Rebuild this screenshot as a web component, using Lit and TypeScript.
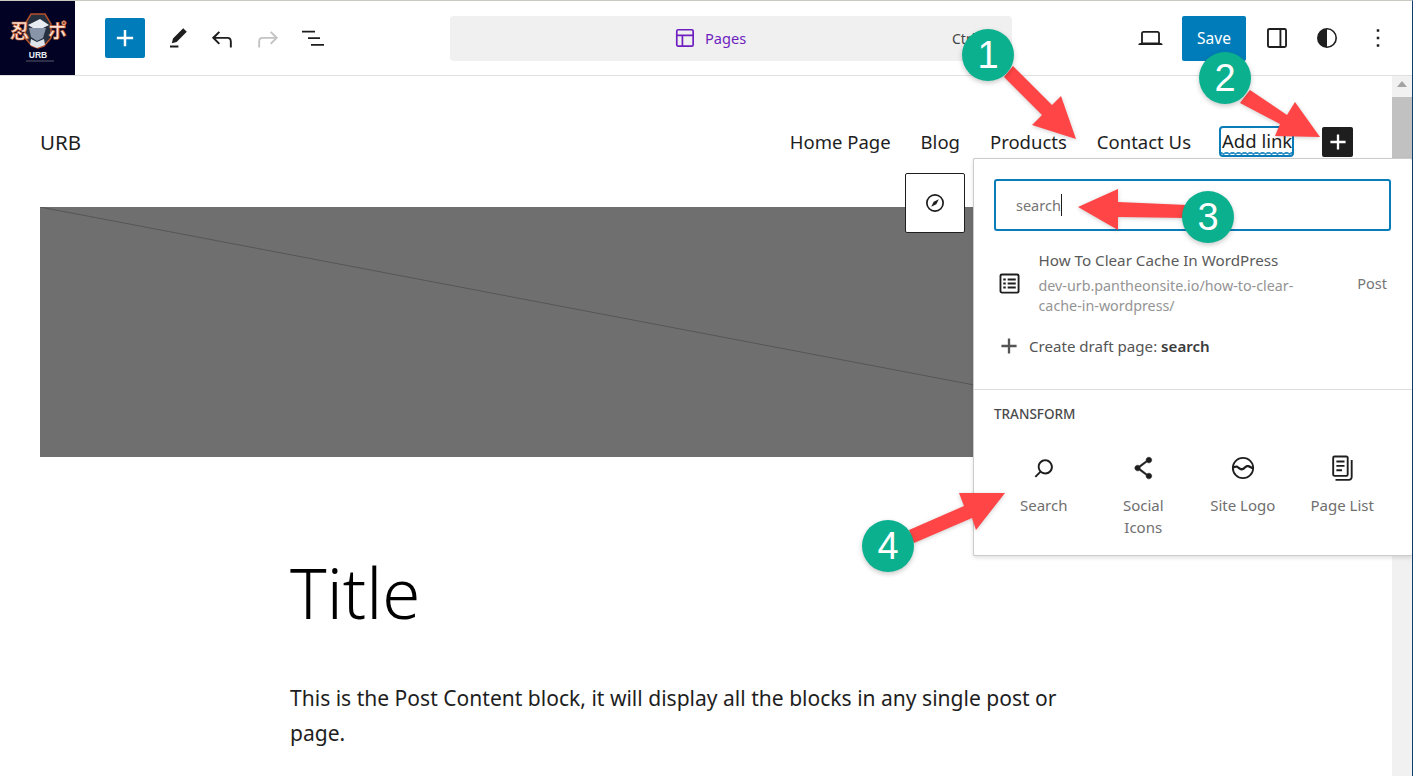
import { LitElement, html, css, svg } from "lit";
import { customElement } from "lit/decorators.js";

const ico = (d: any, size = 24) => html`<svg width=${size} height=${size} viewBox="0 0 24 24" fill="currentColor">${d}</svg>`;

const plus = svg`<path d="M11 5.500h2V11h5.500v2H13v5.500h-2V13H5.500v-2H11z"/>`;
const pen = svg`<path d="m19 7-3-3-8.500 8.500-1 4 4-1L19 7Zm-7 11.500H5V20h7v-1.500Z" transform="translate(-2 -2.600) scale(1.2)"/>`;
const undo = svg`<path d="M18.300 11.700c-.6-.6-1.400-.9-2.300-.9H6.700l3.400-3.400-1.100-1-5.200 5.100 5.200 5.200 1.100-1.100-3.400-3.400H16c.5 0 .9.200 1.200.5.3.3.5.800.5 1.300V19h1.500v-4.500c0-1.100-.3-2-.9-2.800z"/>`;
const redo = svg`<path d="M5.700 11.700c.6-.6 1.400-.9 2.300-.9h9.300l-3.400-3.400 1.100-1 5.200 5.100-5.200 5.200-1.100-1.100 3.400-3.400H8c-.5 0-.9.200-1.200.5-.3.3-.5.800-.5 1.300V19H4.800v-4.500c0-1.100.3-2 .9-2.800z"/>`;
const listView = svg`<path d="M1 4.800h13v1.700H1zM7 11.200h12v1.700H7zM10 18h13v1.700H10z"/>`;
const pages = svg`<path d="M18 4H6a2 2 0 0 0-2 2v12c0 1.100.9 2 2 2h12a2 2 0 0 0 2-2V6a2 2 0 0 0-2-2zM5.500 6c0-.3.200-.5.500-.5h12c.3 0 .5.200.5.500v3h-13V6zm0 12v-7.500H9v8H6a.5.5 0 0 1-.5-.5zm13 0c0 .3-.2.500-.5.500h-7.500v-8h8V18z" transform="translate(-1.600 -1.600) scale(1.13)"/>`;
const laptop = svg`<path d="M20.500 16h-.7V8c0-1.100-.9-2-2-2H6.200c-1.100 0-2 .9-2 2v8h-.7c-.8 0-1.500.7-1.500 1.500h20c0-.8-.7-1.500-1.500-1.500zM5.700 8c0-.3.200-.5.500-.5h11.600c.3 0 .5.200.5.500v7.600H5.700V8z" transform="translate(0 -.2)"/>`;
const sidebar = svg`<path d="M18 4H6a2 2 0 0 0-2 2v12c0 1.100.9 2 2 2h12a2 2 0 0 0 2-2V6a2 2 0 0 0-2-2zM6 18.500a.5.5 0 0 1-.5-.5V6c0-.3.200-.5.500-.5h8v13H6zm12.500-.5c0 .3-.2.500-.5.500h-2.500v-13H18c.3 0 .5.200.5.500v12z" transform="translate(-1.800 -1.800) scale(1.15)"/>`;
const contrast = svg`<path fill-rule="evenodd" d="M12 2a10 10 0 1 0 0 20 10 10 0 0 0 0-20zm0 1.600a8.400 8.400 0 0 1 0 16.800V3.600z"/>`;
const dots = svg`<path d="M13 19h-2v-2h2v2zm0-6h-2v-2h2v2zm0-6h-2V5h2v2z"/>`;
const compass = svg`<path fill-rule="evenodd" d="M12 3a9 9 0 1 0 0 18 9 9 0 0 0 0-18zm0 1.700a7.300 7.300 0 1 1 0 14.600 7.300 7.300 0 0 1 0-14.600z"/><path d="m15.800 8.200-5.100 2.500-2.500 5.100 5.100-2.500z"/>`;
const postList = svg`<path d="M18 4H6a2 2 0 0 0-2 2v12c0 1.100.9 2 2 2h12a2 2 0 0 0 2-2V6a2 2 0 0 0-2-2zm.500 14c0 .3-.2.500-.5.500H6a.5.5 0 0 1-.5-.5V6c0-.3.200-.5.500-.5h12c.3 0 .5.200.5.500v12zM7 8h2v1.600H7zM10.500 8H17v1.600h-6.500zM7 11.200h2v1.600H7zM10.500 11.200H17v1.600h-6.500zM7 14.400h2V16H7zM10.500 14.400H17V16h-6.500z" transform="translate(-1.300 -1.300) scale(1.11)"/>`;
const search = svg`<path d="M13 5c-3.300 0-6 2.700-6 6 0 1.400.5 2.700 1.300 3.700l-3.800 3.800 1.100 1.100 3.800-3.800c1 .8 2.300 1.300 3.700 1.300 3.300 0 6-2.700 6-6S16.300 5 13 5zm0 10.500c-2.500 0-4.500-2-4.500-4.500s2-4.500 4.500-4.500 4.500 2 4.500 4.500-2 4.500-4.500 4.500z"/>`;
const social = svg`<path d="M9 11.800l6.100-4.500c.4.400 1 .7 1.700.7 1.400 0 2.500-1.100 2.500-2.500S18.200 3 16.800 3s-2.500 1.100-2.500 2.500c0 .2 0 .4.100.6l-6.100 4.500c-.4-.3-.9-.5-1.500-.5-1.400 0-2.500 1.100-2.500 2.500s1.100 2.500 2.500 2.500c.6 0 1.100-.2 1.500-.5l6.100 4.500c-.1.200-.1.400-.1.600 0 1.400 1.100 2.500 2.500 2.500s2.500-1.100 2.500-2.500-1.100-2.500-2.500-2.500c-.7 0-1.300.3-1.700.7L9 13.200c.1-.2.100-.5 0-1.400z" transform="translate(0 -1)" stroke="currentColor" stroke-width=".5"/>`;
const siteLogo = svg`<path fill-rule="evenodd" d="M12 2.500a9.500 9.500 0 1 0 0 19 9.500 9.500 0 0 0 0-19zM12 4a8 8 0 0 1 7.900 6.900c-1.100-.5-1.900-1.100-2.900-1.400-1.500-.4-2.900.200-4.100 1.400-1 1-1.800 1.300-2.600 1-.9-.3-1.900-1.200-2.600-1.700-1-.6-2.200-.5-3.500 0A8 8 0 0 1 12 4zm0 16a8 8 0 0 1-7.900-7.500c1.200-.7 2.100-.8 2.800-.4.800.5 1.800 1.500 3 1.900 1.500.5 2.800-.1 4-1.300 1-1 1.800-1.500 2.800-1.200.9.300 1.900.9 3.200 1.500A8 8 0 0 1 12 20z"/>`;
const pageList = svg`<path d="M15.500 2H6a1.800 1.800 0 0 0-1.800 1.800v13.400c0 1 .8 1.800 1.800 1.800h9.500a1.800 1.800 0 0 0 1.800-1.800V3.800c0-1-.8-1.800-1.800-1.800zm.3 15.200c0 .2-.1.300-.3.300H6a.3.3 0 0 1-.3-.3V3.800c0-.2.100-.3.300-.3h9.500c.2 0 .3.100.3.300v13.400zM7.500 6h6.500v1.500H7.500zM7.500 9.500h6.500V11H7.500zM7.500 13h4.500v1.500H7.500z"/><path d="M19 5.500v13.700c0 .8-.7 1.500-1.500 1.500H6.800v1.500h10.700c1.700 0 3-1.300 3-3V5.500z"/>`;

@customElement("app-root")
export class AppRoot extends LitElement {
  static styles = css`
    :host { display: block; width: 1413px; height: 776px; overflow: hidden; position: relative; background: #fff; color: #1e1e1e; font-family: "Noto Sans", "Open Sans", sans-serif; }
    .frame { width: 1413px; height: 776px; display: flex; flex-direction: column; box-sizing: border-box; border-top: 1px solid #c9c9c4; border-right: 1px solid #0f3f6e; }
    .bar { height: 75px; flex: none; display: flex; align-items: center; border-bottom: 1px solid #e0e0e0; box-sizing: border-box; }
    .logo { width: 75px; height: 74px; flex: none; display: block; background: #020225; }
    .left { display: flex; align-items: center; margin-left: 30px; width: 345px; flex: none; }
    .ibtn { width: 45px; height: 40px; display: flex; align-items: center; justify-content: center; flex: none; color: #1e1e1e; }
    .ibtn.off { color: #c4c4c4; }
    .add { width: 40px; height: 40px; background: #007cba; color: #fff; border-radius: 2px; display: flex; align-items: center; justify-content: center; margin-right: 10px; }
    .cmd { width: 562px; height: 45px; background: #f0f0f0; border-radius: 4px; flex: none; display: flex; align-items: center; position: relative; box-sizing: border-box; padding-left: 223px; color: #6f1fc0; font-size: 14.600px; gap: 8px; }
    .cmd .ctrl { position: absolute; left: 502px; color: #444; font-size: 14px; }
    .right { display: flex; align-items: center; margin-left: 113px; }
    .right .ibtn { width: 50px; }
    .right .ibtn.last { margin-left: 1px; }
    .save { width: 64px; height: 45px; background: #007cba; color: #fff; font-size: 15.500px; border-radius: 2px; display: flex; align-items: center; justify-content: center; margin: 0 6px 0 7px; }
    .body { flex: 1; display: flex; min-height: 0; }
    .canvas { flex: 1; min-width: 0; padding: 0 40px; box-sizing: border-box; }
    .head { height: 131px; display: flex; align-items: flex-start; justify-content: space-between; padding-top: 51px; box-sizing: border-box; font-size: 20.500px; line-height: 30px; }
    .nav { display: flex; align-items: center; gap: 30px; margin-right: -1px; font-size: 18.500px; }
    .addlink { border: 2.500px solid #0a7cb8; border-radius: 4px; height: 31px; line-height: 26px; box-sizing: border-box; padding: 0 1px; width: 75px; overflow: hidden; white-space: nowrap; margin: -1px 0 0 -2px; background-image: radial-gradient(circle at 3px 6px, transparent 2.500px, #2f93c8 2.500px, #2f93c8 4px, transparent 4px); background-size: 6px 5px; background-repeat: repeat-x; background-position: bottom; }
    .blk { width: 31px; height: 30px; background: #1e1e1e; color: #fff; border-radius: 2px; display: flex; align-items: center; justify-content: center; margin-left: -2px; }
    .ph { height: 250px; background: #6f6f6f; display: block; width: 1312px; }
    .post { margin: 0 0 0 250px; width: 780px; }
    h1 { font-weight: 300; font-size: 69px; line-height: 80px; margin: 95px 0 0; color: #000; }
    p { font-size: 21.050px; line-height: 35px; margin: 48px 0 0; color: #1e1e1e; }
    .scroll { width: 20px; flex: none; background: #f1f1f1; display: flex; flex-direction: column; align-items: center; box-sizing: border-box; }
    .up { width: 0; height: 0; border: 5px solid transparent; border-bottom: 6px solid #a3a3a3; border-top: 0; margin: 5px 0 10px; }
    .thumb { width: 100%; height: 420px; background: #c1c1c1; }
    .compass { position: absolute; left: 905px; top: 173px; width: 60px; height: 60px; box-sizing: border-box; background: #fff; border: 1px solid #1e1e1e; border-radius: 2px; display: flex; align-items: center; justify-content: center; }
    .pop { position: absolute; left: 973px; top: 158px; width: 439px; height: 398px; box-sizing: border-box; background: #fff; border: 1px solid #ccc; border-right: 0; border-radius: 2px; box-shadow: 0 2px 4px rgba(0,0,0,.12); padding-top: 20px; display: flex; flex-direction: column; }
    .input { margin-left: 20px; width: 397px; height: 52px; box-sizing: border-box; border: 2px solid #0a7cb8; border-radius: 3px; flex: none; display: flex; align-items: center; padding-left: 20px; font-size: 14.500px; color: #757575; }
    .caret { width: 1.500px; height: 22px; background: #1e1e1e; }
    .res { display: flex; margin-top: 19px; height: 66px; flex: none; align-items: center; padding: 0 25px 0 22px; }
    .res .t { margin-left: 15.500px; flex: 1; }
    .rt { font-size: 15.200px; color: #5a5a5a; line-height: 20px; margin-top: -1px; }
    .ru { font-size: 14.300px; color: #949494; line-height: 20px; width: 280px; margin-top: 6px; }
    .pt { font-size: 14.500px; color: #757575; }
    .draft { display: flex; align-items: center; margin: 16px 0 0 21px; font-size: 15.100px; color: #555; height: 28px; flex: none; gap: 6px; }
    .draft b { color: #3c3c3c; font-weight: 600; }
    .hr { height: 1px; background: #ddd; margin-top: 29px; flex: none; }
    .tr { margin: 15px 0 0 20px; font-size: 13.500px; font-weight: 500; color: #4a4a4a; line-height: 18px; }
    .grid { display: grid; grid-template-columns: repeat(4, 99.500px); margin: 30px 0 0 20px; }
    .cell { display: flex; flex-direction: column; align-items: center; font-size: 15px; line-height: 22px; color: #6f6f6f; text-align: center; gap: 11px; }
    .cell .i { height: 30px; display: flex; align-items: center; justify-content: center; color: #1e1e1e; }
    .cell span { width: 70px; }
    .ov { position: absolute; left: 0; top: 0; width: 1413px; height: 776px; pointer-events: none; overflow: visible; }
    .badge { position: absolute; width: 52px; height: 52px; border-radius: 50%; background: #0bb08f; color: #fff; font-size: 38px; display: flex; align-items: center; justify-content: center; box-shadow: 0 2px 5px rgba(0,0,0,.22); font-family: "Liberation Sans", sans-serif; }
  `;

  render() {
    const cells: [any, string, number][] = [[search, "Search", 30], [social, "Social Icons", 27], [siteLogo, "Site Logo", 28], [pageList, "Page List", 30]];
    const badges: [number, number, string][] = [[988, 55, "1"], [1225, 78, "2"], [1208, 217, "3"], [888, 546, "4"]];
    return html`
      <div class="frame">
        <div class="bar">
          <svg class="logo" viewBox="0 0 75 74">
            <path d="M31 13h14l6 10v14l-7 8-6 2-6-2-7-8V23z" fill="#26303f" stroke="#b5502a" stroke-width="1.500"/>
            <path d="M28 24l12-6 9 6-6 3H33z" fill="#e8ecf2"/>
            <path d="M29 27h17l-3 10-6 3-6-4z" fill="#8895a8"/>
            <path d="M31 38l6 3 7-3 1 6-8 3-7-3z" fill="#dfe3ea"/>
            <text x="10" y="37" font-size="19" font-weight="700" fill="#fbe3d4" stroke="#c85a28" stroke-width=".6" font-family="Noto Sans CJK JP">忍</text>
            <text x="48" y="37" font-size="19" font-weight="700" fill="#fbe3d4" stroke="#c85a28" stroke-width=".6" font-family="Noto Sans CJK JP">ポ</text>
            <text x="38" y="57" font-size="8.500" font-weight="600" text-anchor="middle" fill="#e8ecf2" font-family="Liberation Sans">URB</text>
            <rect x="26" y="59.500" width="28" height="1" fill="#55596e"/>
          </svg>
          <div class="left">
            <div class="add">${ico(plus, 30)}</div>
            <div class="ibtn">${ico(pen)}</div>
            <div class="ibtn">${ico(undo, 31)}</div>
            <div class="ibtn off">${ico(redo, 31)}</div>
            <div class="ibtn">${ico(listView)}</div>
          </div>
          <div class="cmd">${ico(pages)}<span>Pages</span><span class="ctrl">Ctrl K</span></div>
          <div class="right">
            <div class="ibtn">${ico(laptop, 29)}</div>
            <div class="save">Save</div>
            <div class="ibtn">${ico(sidebar, 26)}</div>
            <div class="ibtn">${ico(contrast)}</div>
            <div class="ibtn last">${ico(dots, 30)}</div>
          </div>
        </div>
        <div class="body">
          <div class="canvas">
            <div class="head">
              <div>URB</div>
              <div class="nav">
                <span>Home Page</span><span>Blog</span><span>Products</span><span>Contact Us</span>
                <span class="addlink">Add link</span>
                <span class="blk">${ico(plus, 28)}</span>
              </div>
            </div>
            <svg class="ph" viewBox="0 0 1312 250"><line x1="0" y1="0" x2="1312" y2="250" stroke="#565656" stroke-width="1"/></svg>
            <div class="post">
              <h1>Title</h1>
              <p>This is the Post Content block, it will display all the blocks in any single post or page.</p>
            </div>
          </div>
          <div class="scroll"><div class="up"></div><div class="thumb"></div></div>
        </div>
      </div>
      <div class="compass">${ico(compass, 24)}</div>
      <div class="pop">
        <div class="input">search<span class="caret"></span></div>
        <div class="res">
          ${ico(postList, 27)}
          <div class="t">
            <div class="rt">How To Clear Cache In WordPress</div>
            <div class="ru">dev-urb.pantheonsite.io/how-to-clear-cache-in-wordpress/</div>
          </div>
          <div class="pt">Post</div>
        </div>
        <div class="draft">${ico(plus, 28)}<span>Create draft page: <b>search</b></span></div>
        <div class="hr"></div>
        <div class="tr">TRANSFORM</div>
        <div class="grid">
          ${cells.map(([i, l, s]) => html`<div class="cell"><div class="i">${ico(i, s)}</div><span>${l}</span></div>`)}
        </div>
      </div>
      <svg class="ov">
        <g fill="#ff4545" style="filter: drop-shadow(0 1px 2px rgba(0,0,0,.2))">
          <polygon points="1013,66 1052,105 1061,96 1076,139 1032,125 1042,115 1004,77"/>
          <polygon points="1250,90 1287,115 1295,102 1320,137 1275,136 1280,124 1240,103"/>
          <polygon points="1078,207 1118,189 1118,202 1187,205 1187,218 1118,217 1118,230"/>
          <polygon points="1005,493 959,493 964,506 909,530 914,543 972,518 976,530"/>
        </g>
      </svg>
      ${badges.map(([x, y, n]) => html`<div class="badge" style="left:${x - 26}px;top:${y - 26}px">${n}</div>`)}
    `;
  }
}
